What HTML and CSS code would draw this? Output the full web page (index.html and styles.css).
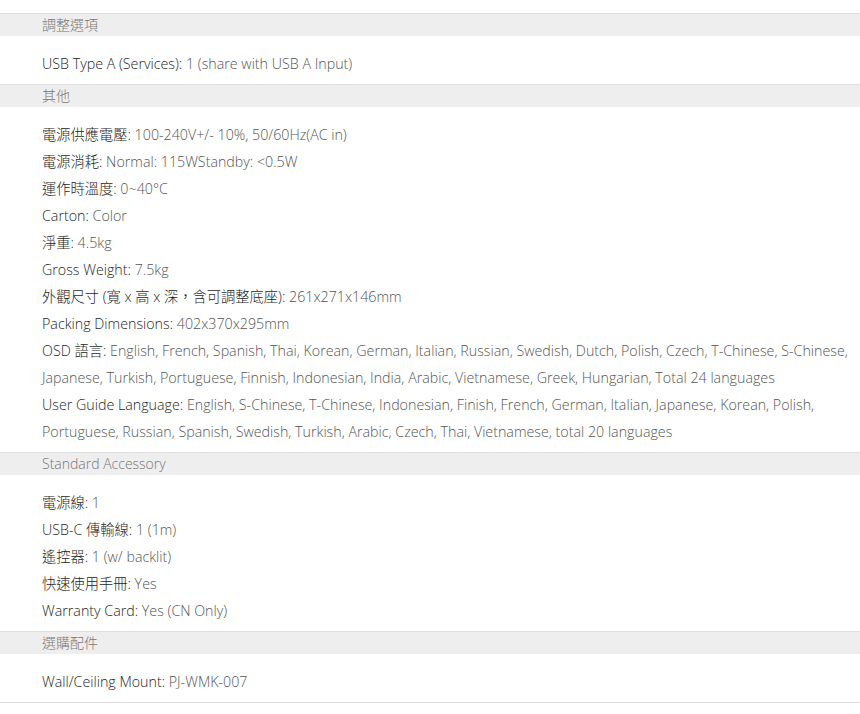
FILE: index.html
```html
<!DOCTYPE html>
<html lang="zh-Hant">
<head>
<meta charset="utf-8">
<link rel="stylesheet" href="styles.css">
</head>
<body>
<div class="specs">
  <section class="group">
    <h3 class="group-title">調整選項</h3>
    <ul class="rows">
      <li><span class="k">USB Type A (Services):</span> <span class="v">1 (share with USB A Input)</span></li>
    </ul>
  </section>
  <section class="group">
    <h3 class="group-title">其他</h3>
    <ul class="rows">
      <li><span class="k">電源供應電壓:</span> <span class="v">100-240V+/- 10%, 50/60Hz(AC in)</span></li>
      <li><span class="k">電源消耗:</span> <span class="v">Normal: 115WStandby: &lt;0.5W</span></li>
      <li><span class="k">運作時溫度:</span> <span class="v">0~40°C</span></li>
      <li><span class="k">Carton:</span> <span class="v">Color</span></li>
      <li><span class="k">淨重:</span> <span class="v">4.5kg</span></li>
      <li><span class="k">Gross Weight:</span> <span class="v">7.5kg</span></li>
      <li><span class="k">外觀尺寸 (寬 x 高 x 深，含可調整底座):</span> <span class="v">261x271x146mm</span></li>
      <li><span class="k">Packing Dimensions:</span> <span class="v">402x370x295mm</span></li>
      <li><span class="k">OSD 語言:</span> <span class="v">English, French, Spanish, Thai, Korean, German, Italian, Russian, Swedish, Dutch, Polish, Czech, T-Chinese, S-Chinese, Japanese, Turkish, Portuguese, Finnish, Indonesian, India, Arabic, Vietnamese, Greek, Hungarian, Total 24 languages</span></li>
      <li><span class="k">User Guide Language:</span> <span class="v">English, S-Chinese, T-Chinese, Indonesian, Finish, French, German, Italian, Japanese, Korean, Polish, Portuguese, Russian, Spanish, Swedish, Turkish, Arabic, Czech, Thai, Vietnamese, total 20 languages</span></li>
    </ul>
  </section>
  <section class="group">
    <h3 class="group-title">Standard Accessory</h3>
    <ul class="rows">
      <li><span class="k">電源線:</span> <span class="v">1</span></li>
      <li><span class="k">USB-C 傳輸線:</span> <span class="v">1 (1m)</span></li>
      <li><span class="k">遙控器:</span> <span class="v">1 (w/ backlit)</span></li>
      <li><span class="k">快速使用手冊:</span> <span class="v">Yes</span></li>
      <li><span class="k">Warranty Card:</span> <span class="v">Yes (CN Only)</span></li>
    </ul>
  </section>
  <section class="group">
    <h3 class="group-title">選購配件</h3>
    <ul class="rows">
      <li><span class="k">Wall/Ceiling Mount:</span> <span class="v">PJ-WMK-007</span></li>
    </ul>
  </section>
</div>
</body>
</html>
```
FILE: styles.css
```css
html, body {
  margin: 0;
  padding: 0;
  background: #fff;
}
body {
  font-family: "Open Sans", "Noto Sans CJK TC", sans-serif;
  font-size: 14px;
  color: #333;
}
.specs {
  padding-top: 13px;
  border-bottom: 1px solid #ddd;
  width: 860px;
}
.group-title {
  margin: 0;
  height: 22px;
  line-height: 22px;
  border-top: 1px solid #ddd;
  background: #eee;
  padding-left: 42px;
  font-size: 14px;
  font-weight: 300;
  color: #777;
}
.rows {
  list-style: none;
  margin: 0;
  padding: 14px 12px 7px 42px;
  font-size: 14.25px;
}
.rows li {
  line-height: 27px;
}
.k {
  color: #1e1e1e;
  font-weight: 300;
}
.v {
  color: #555;
  font-weight: 300;
}
```
